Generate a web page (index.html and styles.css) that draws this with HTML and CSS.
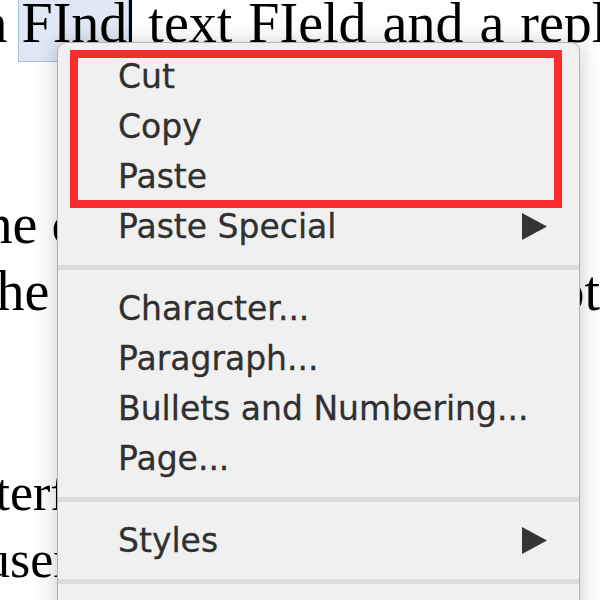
FILE: index.html
```html
<!DOCTYPE html>
<html lang="en">
<head>
<meta charset="utf-8">
<title>Context menu</title>
<link rel="stylesheet" href="styles.css">
</head>
<body>
<div class="page">
  <div class="doc">
    <div class="line l0">in <span class="sel">FInd</span><span class="caret"></span><span class="rest"> text FIeld and a replace field</span></div>
    <div class="line"></div>
    <div class="line"></div>
    <div class="line l3">the context menu of the</div>
    <div class="line l4"><span>the selected</span><span class="tail">not</span></div>
    <div class="line"></div>
    <div class="line"></div>
    <div class="line l7">interface</div>
    <div class="line l8">user</div>
  </div>

  <div class="menu">
    <div class="group">
      <div class="item">Cut</div>
      <div class="item">Copy</div>
      <div class="item">Paste</div>
    </div>
    <div class="item">Paste Special<svg class="arrow" width="25" height="27" viewBox="0 0 25 27"><path d="M0 0L25 13.5L0 27Z"/></svg></div>
    <div class="sep"></div>
    <div class="item">Character...</div>
    <div class="item">Paragraph...</div>
    <div class="item">Bullets and Numbering...</div>
    <div class="item">Page...</div>
    <div class="sep"></div>
    <div class="item">Styles<svg class="arrow" width="25" height="27" viewBox="0 0 25 27"><path d="M0 0L25 13.5L0 27Z"/></svg></div>
    <div class="sep"></div>
    <div class="item">Font...</div>
  </div>
</div>
</body>
</html>
```

FILE: styles.css
```css
html, body {
  margin: 0;
  padding: 0;
  background: #ffffff;
}

.page {
  position: relative;
  width: 600px;
  height: 600px;
  overflow: hidden;
  background: #ffffff;
}

.doc {
  margin-top: -10px;
  font-family: "Liberation Serif", "Times New Roman", serif;
  font-size: 56px;
  color: #000000;
}

.line {
  height: 67px;
  line-height: 67px;
  white-space: nowrap;
}

.l0 { text-indent: -36px; }
.l0 .rest { word-spacing: 2px; }
.l3 { text-indent: -31px; }
.l4 {
  display: flex;
}
.l4 > span:first-child { margin-left: -19px; }
.l4 .tail {
  margin-left: auto;
  flex: 0 0 66px;
}
.l7 {
  font-size: 52px;
  text-indent: -45px;
}
.l8 {
  font-size: 52px;
  text-indent: -16px;
}

.sel {
  display: inline-block;
  text-indent: 0;
  line-height: 56px;
  background: #dfe8f4;
  border: 1px solid #a9bfdc;
  border-top: 0;
  padding: 0 1px 10px 3px;
  margin: 0 0 -12px -4px;
  vertical-align: baseline;
}

.caret {
  display: inline-block;
  width: 3px;
  height: 50px;
  background: #000000;
  vertical-align: baseline;
}

.menu {
  position: absolute;
  left: 57px;
  top: 42px;
  width: 521px;
  height: 620px;
  padding-top: 8px;
  background: #f0f0f0;
  border: 1px solid #b3b3b3;
  border-radius: 9px;
  box-shadow: 0 2px 22px rgba(0, 0, 0, 0.22);
  font-family: "DejaVu Sans", "Liberation Sans", sans-serif;
  font-size: 33px;
  color: #303030;
  -webkit-text-stroke: 0.3px #303030;
}

.group {
  position: relative;
}

.group::after {
  content: "";
  position: absolute;
  left: 12px;
  right: 17px;
  top: -1px;
  bottom: -7px;
  border: 8px solid #fb2c2c;
}

.item {
  display: flex;
  align-items: center;
  justify-content: space-between;
  height: 50px;
  padding: 0 32px 0 60px;
}

.arrow {
  fill: #353535;
  flex: none;
}

.sep {
  height: 5px;
  margin: 14px 0 13px;
  background: #dcdcdc;
}
```
